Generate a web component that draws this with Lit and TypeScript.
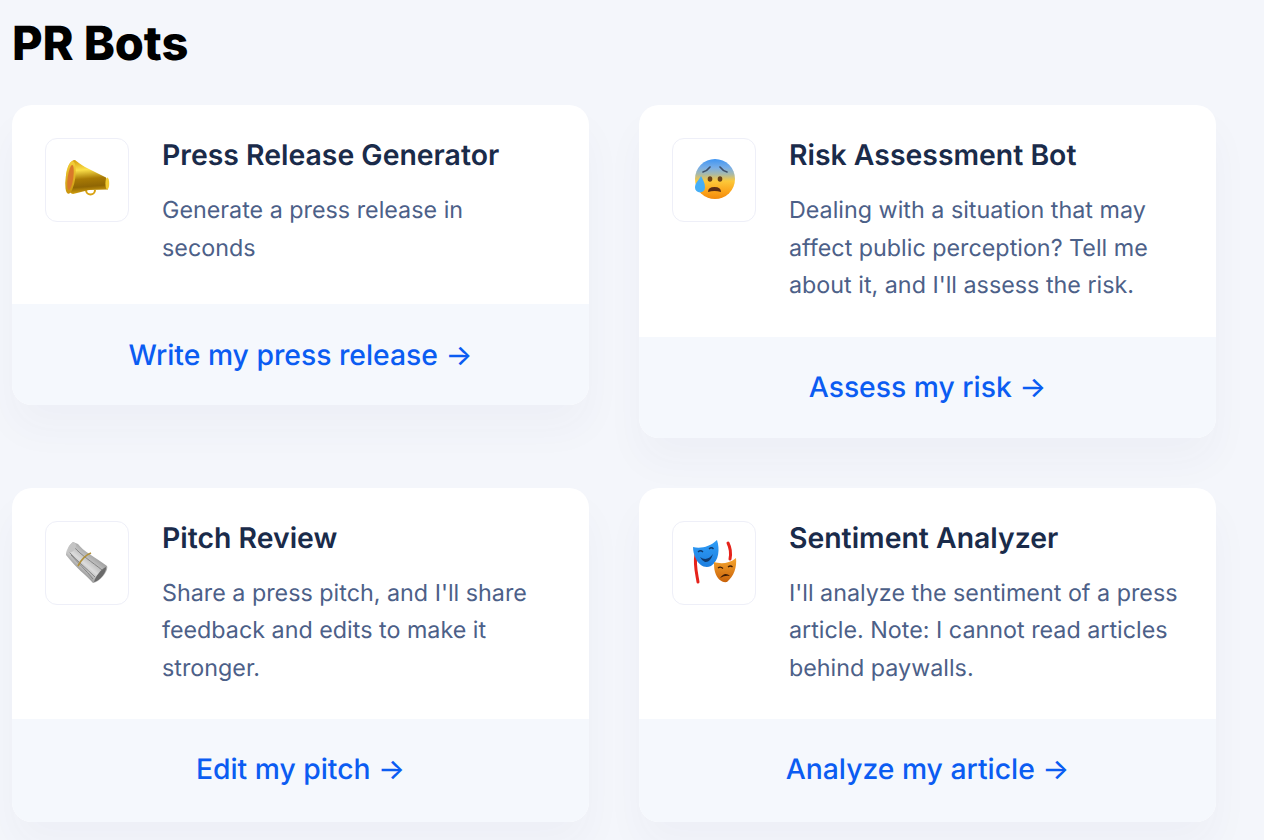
import { LitElement, html, css, svg } from "lit";
import { customElement } from "lit/decorators.js";

const megaphone = svg`
  <defs>
    <linearGradient id="mg" x1="0.45" y1="0" x2="0.55" y2="1">
      <stop offset="0" stop-color="#d9a30f"/><stop offset=".28" stop-color="#fbe04a"/>
      <stop offset=".55" stop-color="#a87a05"/><stop offset=".78" stop-color="#8f6604"/><stop offset="1" stop-color="#e3ad10"/>
    </linearGradient>
    <linearGradient id="mr" x1="0" y1="0" x2="0" y2="1">
      <stop offset="0" stop-color="#f4d03a"/><stop offset="1" stop-color="#c9920c"/>
    </linearGradient>
  </defs>
  <path d="M41 52 C41 58 50 58 50 52" fill="none" stroke="#d8a110" stroke-width="2"/>
  <path d="M30 22 C33 24 36 27 40 29 L61 39.500 L63 51.500 L44 52 L28 56 C24 56 21 47 21 39 C21 30 25 22 30 22Z" fill="url(#mg)"/>
  <ellipse cx="25.500" cy="39.500" rx="4.800" ry="16.500" transform="rotate(8 25.500 39.500)" fill="url(#mr)"/>
  <ellipse cx="25.500" cy="39.500" rx="2.800" ry="12.500" transform="rotate(8 25.500 39.500)" fill="#d9782a"/>
  <ellipse cx="62.300" cy="45.500" rx="1.900" ry="6" fill="#f2cb32"/>
`;

const face = svg`
  <defs>
    <linearGradient id="fg" x1="0" y1="0" x2="0" y2="1">
      <stop offset="0" stop-color="#3f95f3"/><stop offset=".22" stop-color="#79aee6"/><stop offset=".38" stop-color="#a8b9a8"/>
      <stop offset=".55" stop-color="#fcc93a"/><stop offset=".82" stop-color="#fba31a"/><stop offset="1" stop-color="#f28a0c"/>
    </linearGradient>
  </defs>
  <circle cx="43" cy="41" r="20" fill="url(#fg)"/>
  <path d="M31 34 Q35 33 38 29 M55 34 Q51 33 48 29" fill="none" stroke="#3f5068" stroke-width="1.600" stroke-linecap="round"/>
  <ellipse cx="38" cy="41" rx="2.300" ry="2.700" fill="#6a4218"/>
  <ellipse cx="48" cy="41" rx="2.300" ry="2.700" fill="#6a4218"/>
  <path d="M36 54 Q36 49 42.500 49 Q49 49 49 54 Q42.500 52 36 54Z" fill="#5b2d14"/>
  <path d="M29 38 C31 42 33 45 33 49.500 A5 5 0 0 1 23 49.500 C23 45 27 42 29 38Z" fill="#45aef5"/>
`;

const paper = svg`
  <defs>
    <linearGradient id="pg" x1="0.85" y1="0.1" x2="0.15" y2="0.9">
      <stop offset="0" stop-color="#6f6f6f"/><stop offset=".3" stop-color="#a8a8a8"/><stop offset=".55" stop-color="#dcdcdc"/><stop offset=".8" stop-color="#8c8c8c"/><stop offset="1" stop-color="#5c5c5c"/>
    </linearGradient>
  </defs>
  <path d="M28 21 L33 23 C38 30 50 36 62 45 C64 50 55 61 48 62 C41 54 31 47 21 34 C21 29 24 24 28 21Z" fill="url(#pg)"/>
  <path d="M24 31 C32 40 42 48 50 56 M29 26 C36 34 47 41 57 49 M26 34 C33 42 41 49 48 58" fill="none" stroke="#7e7e7e" stroke-width="0.900"/>
  <path d="M28 21 C31 22 32 25 30 28 C28 31 25 32 22 32 C22 28 24 24 28 21Z" fill="#c4c4c4"/>
  <path d="M61 46 C62 51 55 60 49 61 C50 56 56 48 61 46Z" fill="#6a6a6a"/>
  <path d="M33 45 Q38 35 46 32" fill="none" stroke="#b1913c" stroke-width="1.700"/>
`;

const masks = svg`
  <defs>
    <linearGradient id="bm" x1="0" y1="0" x2="0" y2="1"><stop offset="0" stop-color="#2f9df6"/><stop offset="1" stop-color="#1d7fe0"/></linearGradient>
    <linearGradient id="om" x1="0" y1="0" x2="0" y2="1"><stop offset="0" stop-color="#f6a62e"/><stop offset="1" stop-color="#c9620a"/></linearGradient>
  </defs>
  <path d="M24 33 C22 44 25 54 26 61" fill="none" stroke="#e5231b" stroke-width="3" stroke-linecap="round"/>
  <path d="M56 22 C59 28 59 33 58 38" fill="none" stroke="#e5231b" stroke-width="3" stroke-linecap="round"/>
  <path d="M21 26 C28 28 38 26 45 19 C48 28 47 40 39 45 C33 48 27 44 24 38 C22 34 21 30 21 26Z" fill="url(#bm)"/>
  <path d="M26 31 q2.500 -2.500 5 0 M37 28 q2.500 -2.500 4.500 0" fill="none" stroke="#0f3a6e" stroke-width="1.300"/>
  <path d="M28 36 Q35 41 41 33 Q38 42 33 41 Q30 40 28 36Z" fill="#0f3a6e"/>
  <path d="M42 41 C48 43 57 43 64 37 C65 46 62 55 55 61 C50 62 45 58 43 51 C42 48 42 44 42 41Z" fill="url(#om)"/>
  <path d="M46 47 q2.500 -2 5 .5 M56 46 q2.500 -2 4.500 0" fill="none" stroke="#3f1d05" stroke-width="1.300"/>
  <path d="M48 57 Q53 50 58 55 Q53 54 48 57Z" fill="#3f1d05"/>
`;

const cards = [
  { title: "Press Release Generator", desc: "Generate a press release in seconds", cta: "Write my press release →", icon: megaphone },
  { title: "Risk Assessment Bot", desc: "Dealing with a situation that may affect public perception? Tell me about it, and I'll assess the risk.", cta: "Assess my risk →", icon: face },
  { title: "Pitch Review", desc: "Share a press pitch, and I'll share feedback and edits to make it stronger.", cta: "Edit my pitch →", icon: paper },
  { title: "Sentiment Analyzer", desc: "I'll analyze the sentiment of a press article. Note: I cannot read articles behind paywalls.", cta: "Analyze my article →", icon: masks },
];

@customElement("app-root")
export class AppRoot extends LitElement {
  static styles = css`
    :host {
      display: block;
      height: 840px;
      overflow: hidden;
      background: #f4f6fb;
      font-family: Inter, "Liberation Sans", sans-serif;
      text-rendering: geometricPrecision;
      box-sizing: border-box;
      padding: 18px 48px 0 12px;
    }
    h1 {
      margin: 0 0 59px;
      font-size: 47px;
      line-height: 52px;
      height: 28px;
      font-weight: 800;
      letter-spacing: -0.1px;
      color: #000;
    }
    .grid {
      display: grid;
      grid-template-columns: 577px 577px;
      column-gap: 50px;
      row-gap: 50px;
      align-items: start;
    }
    .card {
      background: #fff;
      border-radius: 20px;
      overflow: hidden;
      box-shadow: 0 24px 40px rgba(60, 70, 110, 0.035);
    }
    .body {
      display: flex;
      gap: 33px;
      padding: 33px;
      min-height: 133px;
    }
    .icon {
      flex: none;
      width: 84px;
      height: 84px;
      box-sizing: border-box;
      border: 1px solid #eeeff8;
      border-radius: 12px;
      background: #fff;
    }
    .icon svg {
      display: block;
      margin: -1px;
      width: 84px;
      height: 84px;
      filter: blur(0.35px);
    }
    h2 {
      margin: 0 0 19px;
      font-size: 28.4px;
      line-height: 34px;
      font-weight: 600;
      color: #1a2b4a;
    }
    p {
      margin: 0;
      font-size: 23.3px;
      line-height: 37.5px;
      font-weight: 400;
      color: #4c6088;
    }
    .foot {
      display: flex;
      align-items: center;
      justify-content: center;
      box-sizing: border-box;
      height: 101px;
      background: #f5f8fd;
      color: #0b5cf2;
      font-size: 28.3px;
      font-weight: 500;
    }
    .grid .card:nth-child(n + 3) .foot {
      height: 103px;
      padding-bottom: 3px;
    }
  `;

  render() {
    return html`
      <h1>PR Bots</h1>
      <div class="grid">
        ${cards.map(
          (c) => html`
            <div class="card">
              <div class="body">
                <div class="icon"><svg viewBox="0 0 84 84">${c.icon}</svg></div>
                <div>
                  <h2>${c.title}</h2>
                  <p>${c.desc}</p>
                </div>
              </div>
              <div class="foot">${c.cta}</div>
            </div>
          `
        )}
      </div>
    `;
  }
}
